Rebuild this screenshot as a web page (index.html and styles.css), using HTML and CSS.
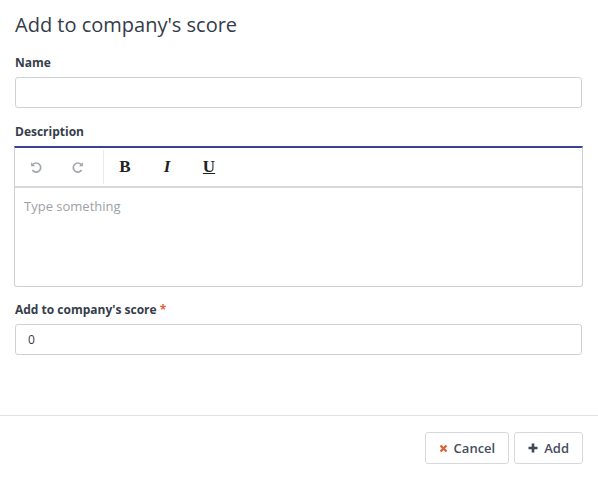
FILE: index.html
```html
<!DOCTYPE html>
<html>
<head>
<meta charset="utf-8">
<link rel="stylesheet" href="styles.css">
</head>
<body>
<div class="modal">
  <div class="body">
    <h1 class="title">Add to company's score</h1>
    <div class="field">
      <label class="label">Name</label>
      <input class="input" type="text">
    </div>
    <div class="field tight">
      <label class="label">Description</label>
      <div class="editor">
        <div class="toolbar">
          <div class="group hist">
            <span class="tbtn">
              <svg width="13" height="13" viewBox="0 0 12 12"><path d="M2.6 3.2A4.2 4.2 0 1 1 2.2 8.4" fill="none" stroke="#a3a7ae" stroke-width="1.6"/><path d="M1 1.1v3.8h3.8z" fill="#a3a7ae"/></svg>
            </span>
            <span class="tbtn">
              <svg width="13" height="13" viewBox="0 0 12 12"><path d="M9.4 3.2A4.2 4.2 0 1 0 9.8 8.4" fill="none" stroke="#a3a7ae" stroke-width="1.6"/><path d="M11 1.1v3.8h-3.8z" fill="#a3a7ae"/></svg>
            </span>
          </div>
          <div class="group">
            <span class="tbtn fmt b">B</span>
            <span class="tbtn fmt i">I</span>
            <span class="tbtn fmt u">U</span>
          </div>
        </div>
        <div class="content">Type something</div>
      </div>
    </div>
    <div class="field">
      <label class="label">Add to company's score <span class="req">*</span></label>
      <input class="input" type="text" value="0">
    </div>
  </div>
  <div class="footer">
    <button class="btn"><svg width="9" height="9" viewBox="0 0 9 9"><path d="M1.5 1.5l6 6M7.5 1.5l-6 6" stroke="#e0623a" stroke-width="2.4"/></svg>Cancel</button>
    <button class="btn"><svg width="10" height="10" viewBox="0 0 10 10"><path d="M5 0.5v9M0.5 5h9" stroke="#3f4655" stroke-width="2.6"/></svg>Add</button>
  </div>
</div>
</body>
</html>
```

FILE: styles.css
```css
* { box-sizing: border-box; }
html, body { margin: 0; padding: 0; background: #fff; }
body {
  font-family: "Open Sans", "Noto Sans", sans-serif;
  color: #363d4b;
  width: 598px;
  height: 479px;
}
.modal {
  height: 479px;
  display: flex;
  flex-direction: column;
}
.body {
  padding: 11px 15px 0 15px;
  height: 416px;
  border-bottom: 1px solid #e2e2e2;
}
.title {
  margin: 0 0 16px 0;
  font-size: 20px;
  font-weight: 400;
  line-height: 28px;
  color: #343b4a;
}
.field { margin-bottom: 16px; }
.field.tight { margin-bottom: 15px; }
.label {
  display: block;
  font-size: 12px;
  font-weight: 700;
  line-height: 16px;
  margin-bottom: 6px;
  color: #363d4b;
}
.req { color: #e0623a; }
.input {
  display: block;
  width: 567px;
  height: 31px;
  border: 1px solid #cfd1d5;
  border-radius: 3px;
  padding: 0 12px;
  font-family: "Open Sans", sans-serif;
  font-size: 12px;
  color: #363d4b;
  outline: none;
}
.editor {
  margin-left: -1px;
  width: 569px;
  border: 1px solid #cfd1d5;
  border-top: 2px solid #3c4290;
  border-radius: 0 0 3px 3px;
}
.toolbar {
  display: flex;
  height: 40px;
  border-bottom: 2px solid #d8d8d8;
}
.group {
  display: flex;
  align-items: center;
}
.hist {
  border-right: 1px solid #ebebeb;
  margin: 2px 0;
  padding: 0 5px 0 1px;
}
.tbtn {
  display: flex;
  align-items: center;
  justify-content: center;
  width: 41px;
  height: 34px;
}
.fmt {
  width: 42px;
  font-family: "Liberation Serif", serif;
  font-size: 17px;
  color: #222;
}
.b { font-weight: 700; }
.i { font-style: italic; font-weight: 700; }
.u { text-decoration: underline; font-weight: 700; }
.content {
  height: 98px;
  padding: 9px 9px;
  font-size: 13px;
  color: #9da1a7;
}
.footer {
  flex: 1;
  display: flex;
  justify-content: flex-end;
  align-items: flex-start;
  padding: 16px 15px 0 0;
  gap: 5px;
}
.btn {
  display: flex;
  align-items: center;
  gap: 6px;
  height: 32px;
  padding: 0 13px;
  background: #fff;
  border: 1px solid #d6d8dc;
  border-radius: 3px;
  font-family: "Open Sans", sans-serif;
  font-size: 13px;
  font-weight: 600;
  color: #464d5c;
}
```
